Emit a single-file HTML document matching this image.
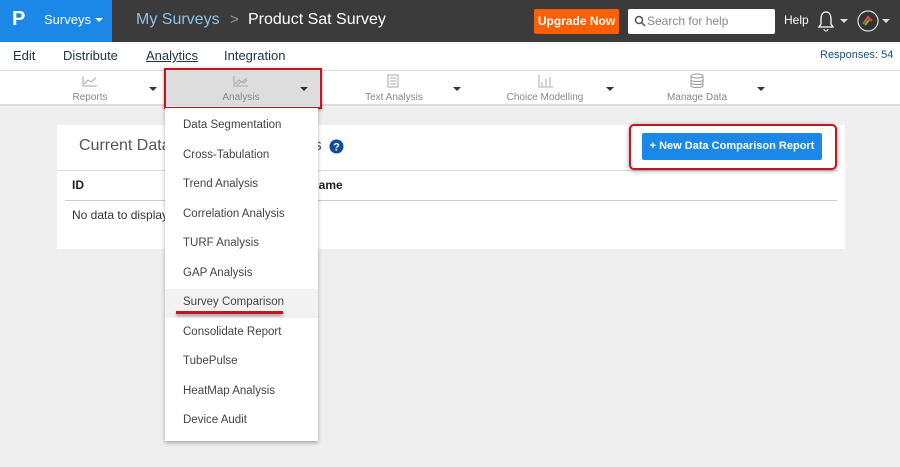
<!DOCTYPE html>
<html><head><style>
*{margin:0;padding:0;box-sizing:border-box}
body{width:900px;height:467px;background:#efefef;font-family:"Liberation Sans",sans-serif;position:relative;overflow:hidden}
.a{position:absolute}
.top{left:0;top:0;width:900px;height:42px;background:#3b3b3b}
.blue{left:0;top:0;width:112px;height:42px;background:#1b87e6}
.nav{left:0;top:42px;width:900px;height:28px;background:#fff}
.tb{left:0;top:70px;width:900px;height:36px;background:#fff;border-top:1px solid #ddd;border-bottom:2px solid #ddd}
.tl{font-size:10px;color:#888;text-align:center}
.car{width:0;height:0;border-left:4px solid transparent;border-right:4px solid transparent;border-top:4px solid #333}
.card{left:57px;top:125px;width:788px;height:124px;background:#fff}
.dd{left:165px;top:108px;width:153px;height:333px;background:#fff;box-shadow:0 2px 4px rgba(0,0,0,.3)}
.it{left:18px;font-size:11.5px;color:#444}
</style></head><body>
<div class="a top"></div>
<div class="a blue"></div>
<div class="a" style="left:12px;top:8px;color:#fff;font-weight:bold;font-size:20px">P</div>
<div class="a" style="left:44px;top:12px;color:#fff;font-size:13px">Surveys</div>
<div class="a car" style="left:95px;top:18px;border-top-color:#fff"></div>
<div class="a" style="left:136px;top:11px;color:#8fc1e8;font-size:16px">My Surveys</div>
<div class="a" style="left:230px;top:11px;color:#999;font-size:15px">&gt;</div>
<div class="a" style="left:248px;top:11px;color:#fff;font-size:16px">Product Sat Survey</div>
<div class="a" style="left:534px;top:9px;width:85px;height:25px;background:#ff5f00;border-radius:2px;color:#fff;font-size:12px;font-weight:bold;text-align:center;line-height:25px">Upgrade Now</div>
<div class="a" style="left:628px;top:9px;width:147px;height:25px;background:#fff;border-radius:2px;color:#888;font-size:12px;line-height:25px;padding-left:19px">Search for help</div>
<svg class="a" style="left:634px;top:15px" width="12" height="12"><circle cx="5" cy="5" r="3.5" stroke="#555" stroke-width="1.5" fill="none"/><line x1="7.5" y1="7.5" x2="11" y2="11" stroke="#555" stroke-width="1.5"/></svg>
<div class="a" style="left:784px;top:13px;color:#fff;font-size:12px">Help</div>
<svg class="a" style="left:816px;top:10px" width="20" height="22"><path d="M10 2C6 2 5 6 5 9v5l-2 3h14l-2-3V9c0-3-1-7-5-7z" fill="none" stroke="#fff" stroke-width="1.3"/><path d="M8 19a2 2 0 004 0" fill="none" stroke="#fff"/></svg>
<div class="a car" style="left:840px;top:19px;border-top-color:#ddd"></div>
<svg class="a" style="left:856px;top:9px" width="24" height="24"><circle cx="12" cy="12" r="10" fill="#333" stroke="#ddd" stroke-width="1.2"/><path d="M7 15l5-7 4 4" stroke="#e44" stroke-width="2" fill="none"/><path d="M9 16l4-5" stroke="#4c4" stroke-width="2"/></svg>
<div class="a car" style="left:882px;top:19px;border-top-color:#ddd"></div>
<div class="a nav"></div>
<div class="a" style="left:13px;top:48px;font-size:13px;color:#234">Edit</div>
<div class="a" style="left:63px;top:48px;font-size:13px;color:#234">Distribute</div>
<div class="a" style="left:146px;top:48px;font-size:13px;color:#234;text-decoration:underline">Analytics</div>
<div class="a" style="left:224px;top:48px;font-size:13px;color:#234">Integration</div>
<div class="a" style="left:820px;top:49px;font-size:11px;color:#1a4d80">Responses: 54</div>
<div class="a tb"></div>
<div class="a" style="left:166px;top:70px;width:154px;height:36px;background:#ddd"></div>
<div class="a" style="left:164px;top:68px;width:158px;height:41px;border:2px solid #c0181e;box-shadow:0 1px 3px rgba(0,0,0,.4)"></div>
<svg class="a" style="left:82px;top:75px" width="16" height="12"><path d="M1 1v10h14M2 9l4-4 3 2 5-4" stroke="#aaa" fill="none"/></svg>
<div class="a tl" style="left:60px;top:92px;width:60px">Reports</div>
<div class="a car" style="left:149px;top:87px"></div>
<svg class="a" style="left:233px;top:75px" width="16" height="12"><path d="M1 1v10h14M2 9l4-4 3 2 5-4M4 10l4-3 3 1 3-3" stroke="#aaa" fill="none"/></svg>
<div class="a tl" style="left:211px;top:92px;width:60px">Analysis</div>
<div class="a car" style="left:300px;top:87px"></div>
<svg class="a" style="left:387px;top:74px" width="12" height="14"><rect x="1" y="1" width="10" height="12" stroke="#aaa" fill="none"/><path d="M3 4h6M3 7h6M3 10h6" stroke="#aaa"/></svg>
<div class="a tl" style="left:358px;top:92px;width:72px">Text Analysis</div>
<div class="a car" style="left:453px;top:87px"></div>
<svg class="a" style="left:538px;top:74px" width="16" height="14"><path d="M1 1v12h14M4 12V8M8 12V5M12 12V3" stroke="#aaa" fill="none"/></svg>
<div class="a tl" style="left:505px;top:92px;width:80px">Choice Modelling</div>
<div class="a car" style="left:606px;top:87px"></div>
<svg class="a" style="left:690px;top:73px" width="14" height="16"><ellipse cx="7" cy="3" rx="6" ry="2" stroke="#999" fill="none"/><path d="M1 3v10c0 2 12 2 12 0V3M1 7c0 2 12 2 12 0M1 10c0 2 12 2 12 0" stroke="#999" fill="none"/></svg>
<div class="a tl" style="left:662px;top:92px;width:70px">Manage Data</div>
<div class="a car" style="left:757px;top:87px"></div>
<div class="a card"></div>
<div class="a" style="left:79px;top:137px;font-size:16px;color:#555;white-space:nowrap">Current Data Comparison Reports</div>
<svg class="a" style="left:329px;top:139px" width="15" height="15"><circle cx="7.5" cy="7.5" r="7" fill="#0b4d9b"/><text x="7.5" y="11.5" font-size="11" font-weight="bold" fill="#fff" text-anchor="middle" font-family="Liberation Sans">?</text></svg>
<div class="a" style="left:57px;top:170px;width:780px;height:1px;background:#ddd"></div>
<div class="a" style="left:72px;top:178px;font-size:12px;font-weight:bold;color:#222">ID</div>
<div class="a" style="left:310px;top:178px;font-size:12px;font-weight:bold;color:#222">Name</div>
<div class="a" style="left:65px;top:200px;width:772px;height:1px;background:#ccc"></div>
<div class="a" style="left:72px;top:208px;font-size:12px;color:#333">No data to display...</div>
<div class="a" style="left:629px;top:124px;width:208px;height:46px;border:2px solid #c0181e;border-radius:5px;box-shadow:0 1px 4px rgba(0,0,0,.4)"></div>
<div class="a" style="left:642px;top:133px;width:180px;height:27px;background:#1b87e6;border-radius:2px;color:#fff;font-size:11px;font-weight:bold;text-align:center;line-height:27px">+ New Data Comparison Report</div>
<div class="a dd">
<div class="a" style="left:0;top:181px;width:153px;height:29px;background:#f2f2f2"></div>
<div class="a it" style="top:11px">Data Segmentation</div>
<div class="a it" style="top:41px">Cross-Tabulation</div>
<div class="a it" style="top:70px">Trend Analysis</div>
<div class="a it" style="top:100px">Correlation Analysis</div>
<div class="a it" style="top:129px">TURF Analysis</div>
<div class="a it" style="top:159px">GAP Analysis</div>
<div class="a it" style="top:188px">Survey Comparison</div>
<div class="a" style="left:11px;top:203px;width:107px;height:3px;background:#c0181e;box-shadow:0 2px 3px rgba(0,0,0,.4)"></div>
<div class="a it" style="top:218px">Consolidate Report</div>
<div class="a it" style="top:247px">TubePulse</div>
<div class="a it" style="top:277px">HeatMap Analysis</div>
<div class="a it" style="top:306px">Device Audit</div>
</div>
</body></html>
